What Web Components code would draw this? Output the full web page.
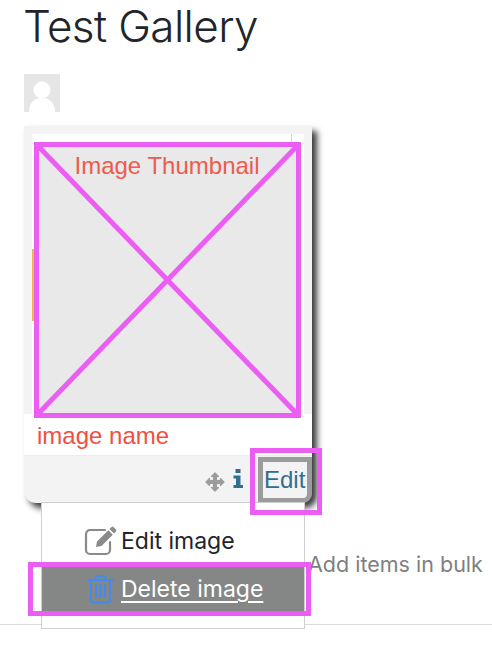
<!DOCTYPE html>
<html>
<head>
<meta charset="utf-8">
<title>Test Gallery</title>
<style>
  html, body { margin: 0; padding: 0; background: #fff; }
  body { font-family: "Inter", "Liberation Sans", sans-serif; color: #212529; overflow: hidden; width: 492px; height: 656px; }
</style>
</head>
<body>
<gallery-page>
  <span slot="title">Test Gallery</span>
  <gallery-card name="image name" thumb="Image Thumbnail"></gallery-card>
</gallery-page>

<script>
class GalleryPage extends HTMLElement {
    constructor() {
        super();
        this.attachShadow({ mode: 'open' });
    }

    connectedCallback() {
        this.shadowRoot.innerHTML = `
        <style>
            :host {
                display: block;
                position: relative;
                height: 656px;
                padding: 0 0 0 24px;
                box-sizing: border-box;
            }
            h1 {
                margin: 0 0 0 -1px;
                height: 74px;
                box-sizing: border-box;
                font-size: 44px;
                line-height: 52px;
                font-weight: 300;
                color: #212529;
                font-family: "Inter", "Liberation Sans", sans-serif;
                letter-spacing: -0.6px;
            }
            .avatar {
                display: block;
                width: 36px;
                height: 38px;
                margin-bottom: 14px;
            }
            .bulk {
                position: absolute;
                left: 308px;
                top: 551px;
                font-size: 21.5px;
                line-height: 26px;
                color: #7f7f7f;
                font-family: "Inter", "Liberation Sans", sans-serif;
                white-space: nowrap;
            }
            hr {
                position: absolute;
                left: 0;
                right: 0;
                top: 624px;
                margin: 0;
                border: 0;
                border-top: 1px solid #dcdcdc;
            }
        </style>
        <h1><slot name="title"></slot></h1>
        <svg class="avatar" viewBox="0 0 36 38">
            <rect width="36" height="38" fill="#e6e6e6"/>
            <circle cx="18" cy="16" r="8.500" fill="#fff"/>
            <path d="M5 38c0-9 5-14 13-14s13 5 13 14z" fill="#fff"/>
        </svg>
        <div class="bulk">Add items in bulk</div>
        <hr>
        <slot></slot>
        `;
    }
}

class GalleryCard extends HTMLElement {
    constructor() {
        super();
        this.attachShadow({ mode: 'open' });
    }

    connectedCallback() {
        const name = this.getAttribute('name') || '';
        const thumb = this.getAttribute('thumb') || '';
        this.shadowRoot.innerHTML = `
        <style>
            :host {
                display: block;
                position: relative;
                width: 288px;
                font-family: "Liberation Sans", sans-serif;
            }
            .card {
                background: #f3f3f3;
                border-radius: 0 0 12px 12px;
                box-shadow: 5px 5px 6px #3a3a3a;
                display: flex;
                flex-direction: column;
                height: 377px;
            }
            .top {
                position: relative;
                margin: 8px 8px 0;
                height: 280px;
                background: #fff;
                padding: 10px 6px 0 4px;
                box-sizing: border-box;
            }
            .top::after {
                content: "";
                position: absolute;
                right: 12px;
                top: 0;
                width: 1px;
                height: 10px;
                background: #d8d8d8;
            }
            .image {
                position: relative;
                height: 270px;
                background: #e9e9e9;
                text-align: center;
            }
            .image span {
                display: block;
                padding-top: 8px;
                font-size: 24px;
                line-height: 28px;
                color: #ef5a4c;
            }
            .name {
                background: #fff;
                height: 41px;
                padding-left: 13px;
                font-size: 24px;
                line-height: 44px;
                color: #f0503f;
            }
            .foot {
                flex: 1;
                display: flex;
                justify-content: flex-end;
                align-items: center;
                border-top: 1px solid #ececec;
            }
            .move { width: 20px; height: 20px; margin-top: 4px; margin-right: 8px; }
            .info { width: 10px; height: 19px; margin-top: -2px; margin-right: 15px; }
            .edit {
                display: block;
                box-sizing: border-box;
                width: 54px;
                height: 46px;
                padding-left: 1px;
                border: 5px solid #9a9c9c;
                border-bottom-right-radius: 9px;
                font-size: 24px;
                line-height: 36px;
                color: #2f6f92;
                background: #f3f3f3;
            }
            .marks {
                position: absolute;
                left: 0;
                top: 0;
                width: 288px;
                height: 377px;
                pointer-events: none;
                overflow: visible;
            }
            .edit-mark {
                position: absolute;
                left: 226px;
                top: 322px;
                width: 72px;
                height: 67px;
                box-sizing: border-box;
                border: 5px solid #ec5df4;
            }
            .line-left {
                position: absolute;
                left: 8px;
                top: 123px;
                width: 2px;
                height: 72px;
                background: #f2b84b;
            }
            .menu {
                position: absolute;
                left: 17px;
                top: 376px;
                width: 264px;
                height: 127px;
                box-sizing: border-box;
                background: #fff;
                border: 1px solid #cfcfcf;
                font-family: "Inter", "Liberation Sans", sans-serif;
                padding-top: 21px;
            }
            .item {
                display: flex;
                align-items: center;
                gap: 4px;
                height: 34px;
                padding-left: 42px;
                font-size: 23px;
                color: #212529;
            }
            .item svg { width: 33px; height: 30px; flex: none; }
            .item.active {
                height: 46px;
                margin-top: 8px;
                background: #858787;
                color: #fff;
            }
            .item.active span { text-decoration: underline; text-underline-offset: 4px; }
            .del-mark {
                position: absolute;
                left: 4px;
                top: 436px;
                width: 283px;
                height: 54px;
                box-sizing: border-box;
                border: 5px solid #ec5df4;
            }
        </style>
        <div class="card">
            <div class="top">
                <div class="image"><span>${thumb}</span></div>
            </div>
            <div class="name">${name}</div>
            <div class="foot">
                <svg class="move" viewBox="0 0 20 20"><path fill="#9c9c9c" stroke="#9c9c9c" stroke-width="1.200" stroke-linejoin="round" d="M10 1l3.500 3.500h-2v4h4v-2L19 10l-3.500 3.500v-2h-4v4h2L10 19l-3.500-3.500h2v-4h-4v2L1 10l3.500-3.500v2h4v-4h-2z"/></svg>
                <svg class="info" viewBox="0 0 10 19"><path fill="#2f6f92" d="M2.500 0h5v4h-5zM.5 6.500h7v9.500h2.500v3H.5v-3H3V9.500H.5z"/></svg>
                <a class="edit">Edit</a>
            </div>
        </div>
        <div class="line-left"></div>
        <div class="menu">
            <div class="item">
                <svg viewBox="0 0 33 30">
                    <path fill="none" stroke="#8a8a8a" stroke-width="2.200" stroke-linecap="round" d="M21 4H6a4 4 0 0 0-4 4v16a4 4 0 0 0 4 4h16a4 4 0 0 0 4-4v-8"/>
                    <path fill="#8a8a8a" d="M27.500 1a1.500 1.500 0 0 1 2 0l2.500 2.500a1.500 1.500 0 0 1 0 2L30 7.500 25.500 3zM24.300 4.300l4.500 4.500-11.300 11.300-5.500 1 1-5.500z"/>
                </svg>
                <span>Edit image</span>
            </div>
            <div class="item active">
                <svg viewBox="0 0 33 30">
                    <g fill="none" stroke="#3f8bf0" stroke-width="2" stroke-linecap="round">
                        <path d="M4 6h25M11.500 6V3.500c0-1 .8-1.500 1.500-1.500h7c.8 0 1.500.5 1.500 1.500V6M7 6v20c0 1.500 1 2.500 2.500 2.500h14c1.500 0 2.500-1 2.500-2.500V6M12 11v12M16.500 11v12M21 11v12"/>
                    </g>
                </svg>
                <span>Delete image</span>
            </div>
        </div>
        <svg class="marks" viewBox="0 0 288 377">
            <rect x="12.500" y="18.500" width="262" height="271" fill="none" stroke="#ec5df4" stroke-width="5"/>
            <path d="M12.500 18.500L274.500 289.500M274.500 18.500L12.500 289.500" stroke="#ec5df4" stroke-width="5"/>
        </svg>
        <div class="edit-mark"></div>
        <div class="del-mark"></div>
        `;
    }
}

customElements.define('gallery-page', GalleryPage);
customElements.define('gallery-card', GalleryCard);
</script>
</body>
</html>
